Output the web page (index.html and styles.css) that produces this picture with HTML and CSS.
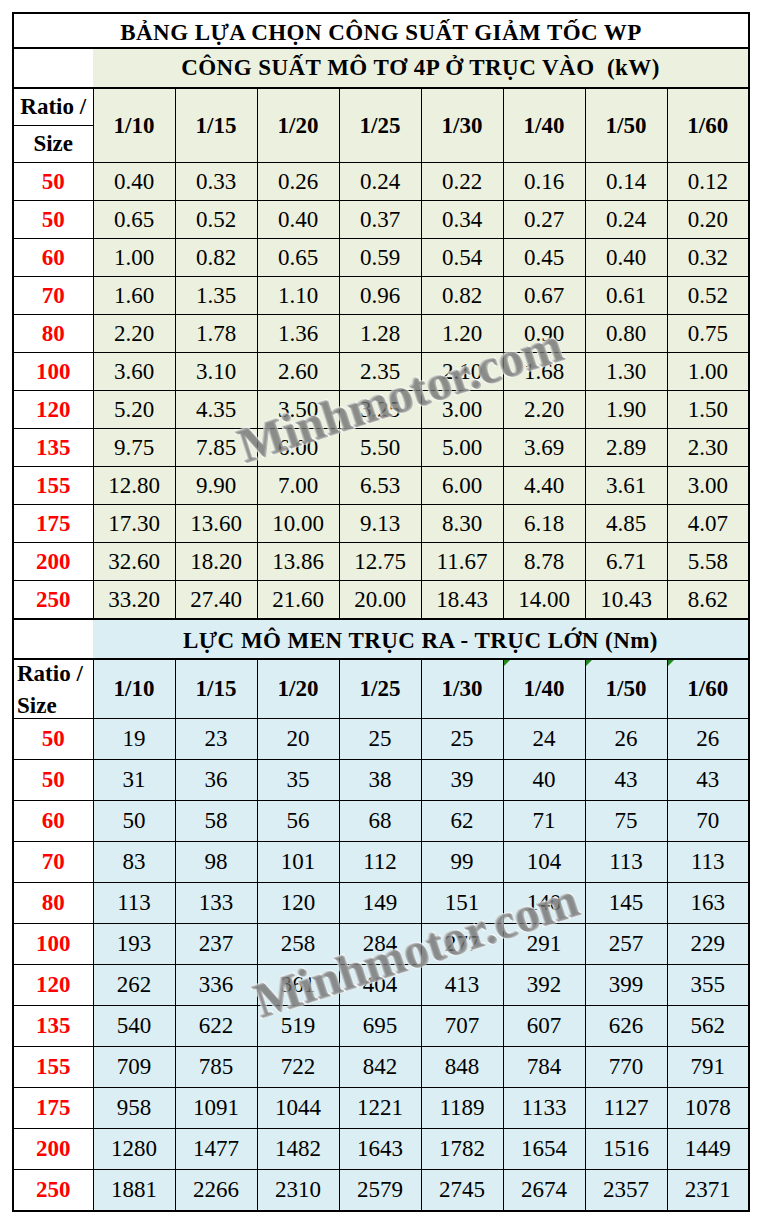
FILE: index.html
```html
<!DOCTYPE html>
<html lang="vi">
<head>
<meta charset="utf-8">
<title>Bảng lựa chọn công suất giảm tốc WP</title>
<link rel="stylesheet" href="styles.css">
</head>
<body>
<div class="page">
  <table class="sheet">
    <colgroup>
      <col class="col-size">
      <col class="col-ratio"><col class="col-ratio"><col class="col-ratio"><col class="col-ratio">
      <col class="col-ratio"><col class="col-ratio"><col class="col-ratio"><col class="col-ratio">
    </colgroup>
    <tbody class="sec power">
      <tr class="title"><th colspan="9">BẢNG LỰA CHỌN CÔNG SUẤT GIẢM TỐC WP</th></tr>
      <tr class="subtitle"><th class="blank"></th><th colspan="8" class="band">CÔNG SUẤT MÔ TƠ 4P Ở TRỤC VÀO&nbsp; (kW)</th></tr>
      <tr class="head head-a">
        <th class="lbl">Ratio /</th>
        <th rowspan="2">1/10</th><th rowspan="2">1/15</th><th rowspan="2">1/20</th><th rowspan="2">1/25</th>
        <th rowspan="2">1/30</th><th rowspan="2">1/40</th><th rowspan="2">1/50</th><th rowspan="2">1/60</th>
      </tr>
      <tr class="head head-b"><th class="lbl">Size</th></tr>
      <tr class="row"><th class="sz">50</th><td>0.40</td><td>0.33</td><td>0.26</td><td>0.24</td><td>0.22</td><td>0.16</td><td>0.14</td><td>0.12</td></tr>
      <tr class="row"><th class="sz">50</th><td>0.65</td><td>0.52</td><td>0.40</td><td>0.37</td><td>0.34</td><td>0.27</td><td>0.24</td><td>0.20</td></tr>
      <tr class="row"><th class="sz">60</th><td>1.00</td><td>0.82</td><td>0.65</td><td>0.59</td><td>0.54</td><td>0.45</td><td>0.40</td><td>0.32</td></tr>
      <tr class="row"><th class="sz">70</th><td>1.60</td><td>1.35</td><td>1.10</td><td>0.96</td><td>0.82</td><td>0.67</td><td>0.61</td><td>0.52</td></tr>
      <tr class="row"><th class="sz">80</th><td>2.20</td><td>1.78</td><td>1.36</td><td>1.28</td><td>1.20</td><td>0.90</td><td>0.80</td><td>0.75</td></tr>
      <tr class="row"><th class="sz">100</th><td>3.60</td><td>3.10</td><td>2.60</td><td>2.35</td><td>2.10</td><td>1.68</td><td>1.30</td><td>1.00</td></tr>
      <tr class="row"><th class="sz">120</th><td>5.20</td><td>4.35</td><td>3.50</td><td>3.25</td><td>3.00</td><td>2.20</td><td>1.90</td><td>1.50</td></tr>
      <tr class="row"><th class="sz">135</th><td>9.75</td><td>7.85</td><td>6.00</td><td>5.50</td><td>5.00</td><td>3.69</td><td>2.89</td><td>2.30</td></tr>
      <tr class="row"><th class="sz">155</th><td>12.80</td><td>9.90</td><td>7.00</td><td>6.53</td><td>6.00</td><td>4.40</td><td>3.61</td><td>3.00</td></tr>
      <tr class="row"><th class="sz">175</th><td>17.30</td><td>13.60</td><td>10.00</td><td>9.13</td><td>8.30</td><td>6.18</td><td>4.85</td><td>4.07</td></tr>
      <tr class="row"><th class="sz">200</th><td>32.60</td><td>18.20</td><td>13.86</td><td>12.75</td><td>11.67</td><td>8.78</td><td>6.71</td><td>5.58</td></tr>
      <tr class="row last"><th class="sz">250</th><td>33.20</td><td>27.40</td><td>21.60</td><td>20.00</td><td>18.43</td><td>14.00</td><td>10.43</td><td>8.62</td></tr>
    </tbody>
    <tbody class="sec torque">
      <tr class="subtitle"><th class="blank"></th><th colspan="8" class="band">LỰC MÔ MEN TRỤC RA - TRỤC LỚN (Nm)</th></tr>
      <tr class="head head-c">
        <th class="lbl lbl-stack"><span class="ln ln-1">Ratio /</span><span class="ln ln-2">Size</span></th>
        <th>1/10</th><th>1/15</th><th>1/20</th><th>1/25</th><th>1/30</th>
        <th class="flag">1/40</th><th class="flag">1/50</th><th class="flag">1/60</th>
      </tr>
      <tr class="row"><th class="sz">50</th><td>19</td><td>23</td><td>20</td><td>25</td><td>25</td><td>24</td><td>26</td><td>26</td></tr>
      <tr class="row"><th class="sz">50</th><td>31</td><td>36</td><td>35</td><td>38</td><td>39</td><td>40</td><td>43</td><td>43</td></tr>
      <tr class="row"><th class="sz">60</th><td>50</td><td>58</td><td>56</td><td>68</td><td>62</td><td>71</td><td>75</td><td>70</td></tr>
      <tr class="row"><th class="sz">70</th><td>83</td><td>98</td><td>101</td><td>112</td><td>99</td><td>104</td><td>113</td><td>113</td></tr>
      <tr class="row"><th class="sz">80</th><td>113</td><td>133</td><td>120</td><td>149</td><td>151</td><td>140</td><td>145</td><td>163</td></tr>
      <tr class="row"><th class="sz">100</th><td>193</td><td>237</td><td>258</td><td>284</td><td>277</td><td>291</td><td>257</td><td>229</td></tr>
      <tr class="row"><th class="sz">120</th><td>262</td><td>336</td><td>361</td><td>404</td><td>413</td><td>392</td><td>399</td><td>355</td></tr>
      <tr class="row"><th class="sz">135</th><td>540</td><td>622</td><td>519</td><td>695</td><td>707</td><td>607</td><td>626</td><td>562</td></tr>
      <tr class="row"><th class="sz">155</th><td>709</td><td>785</td><td>722</td><td>842</td><td>848</td><td>784</td><td>770</td><td>791</td></tr>
      <tr class="row"><th class="sz">175</th><td>958</td><td>1091</td><td>1044</td><td>1221</td><td>1189</td><td>1133</td><td>1127</td><td>1078</td></tr>
      <tr class="row"><th class="sz">200</th><td>1280</td><td>1477</td><td>1482</td><td>1643</td><td>1782</td><td>1654</td><td>1516</td><td>1449</td></tr>
      <tr class="row"><th class="sz">250</th><td>1881</td><td>2266</td><td>2310</td><td>2579</td><td>2745</td><td>2674</td><td>2357</td><td>2371</td></tr>
    </tbody>
  </table>
  <div class="wm wm-power">Minhmotor.com</div>
  <div class="wm wm-torque">Minhmotor.com</div>
</div>
</body>
</html>
```

FILE: styles.css
```css
html, body {
  margin: 0;
  padding: 0;
  background: #ffffff;
}

.page {
  position: relative;
  padding: 12px 0 0 12px;
  font-family: "Liberation Serif", "Times New Roman", serif;
  color: #000;
}

.sheet {
  table-layout: fixed;
  border-collapse: collapse;
  width: 736px;
  border: 2px solid #000;
}

.col-size { width: 80px; }
.col-ratio { width: 82px; }

.sheet th,
.sheet td {
  border: 1px solid #000;
  padding: 0;
  text-align: center;
  vertical-align: middle;
  font-size: 23px;
  line-height: 24px;
  white-space: nowrap;
}

.sheet th { font-weight: bold; }
.sheet td { font-weight: normal; }

/* title: 35px tall band */
.title th {
  height: 28px;
  padding-top: 5px;
  background: #fff;
  border-bottom: 2px solid #000;
  letter-spacing: 0.45px;
}

/* section bands: 40px tall */
.subtitle th {
  height: 38px;
  border-bottom: 2px solid #000;
  letter-spacing: 0.45px;
}
.subtitle .blank {
  background: #fff;
  border-right: none;
}
.subtitle .band { border-left: none; }

.power .band,
.power td,
.power .head th[rowspan] { background: #ebf1de; }

.torque .band,
.torque td,
.torque .head-c th { background: #daeef3; }

.torque .subtitle th {
  border-top: 2px solid #000;
  height: 34px;
  padding-top: 4px;
}

/* header rows */
.head-a th.lbl { height: 36px; }
.head-b th.lbl { height: 36px; }
.head .lbl { background: #fff; }

.head-c th { height: 58px; position: relative; }
.torque .head-c th.lbl-stack {
  background: #fff;
  text-align: left;
  vertical-align: top;
  padding-left: 3px;
}
.lbl-stack .ln { display: block; }
.lbl-stack .ln-1 { line-height: 28px; }
.lbl-stack .ln-2 { line-height: 24px; margin-top: 6px; }

.head-c th.flag::before {
  content: "";
  position: absolute;
  left: 0;
  top: 0;
  border-top: 6px solid #1f8a1f;
  border-right: 6px solid transparent;
}

/* data rows */
.power .row th,
.power .row td { height: 37px; }
.torque .row th,
.torque .row td { height: 40px; }

.sz {
  background: #fff;
  color: #ff0000;
}

/* watermark overlays */
.wm {
  position: absolute;
  font-family: "Liberation Serif", "Times New Roman", serif;
  font-weight: bold;
  font-size: 49px;
  line-height: 1;
  white-space: nowrap;
  color: rgba(130, 130, 130, 0.55);
  -webkit-text-stroke: 3px rgba(250, 250, 250, 0.7);
  paint-order: stroke fill;
  text-shadow: 1px 1px 0 rgba(60, 60, 60, 0.35), -1px -1px 0 rgba(90, 90, 90, 0.25);
  transform: translate(-50%, -50%) rotate(-18deg);
  pointer-events: none;
}
.wm-power { left: 400px; top: 395px; }
.wm-torque { left: 416px; top: 950px; }
```
